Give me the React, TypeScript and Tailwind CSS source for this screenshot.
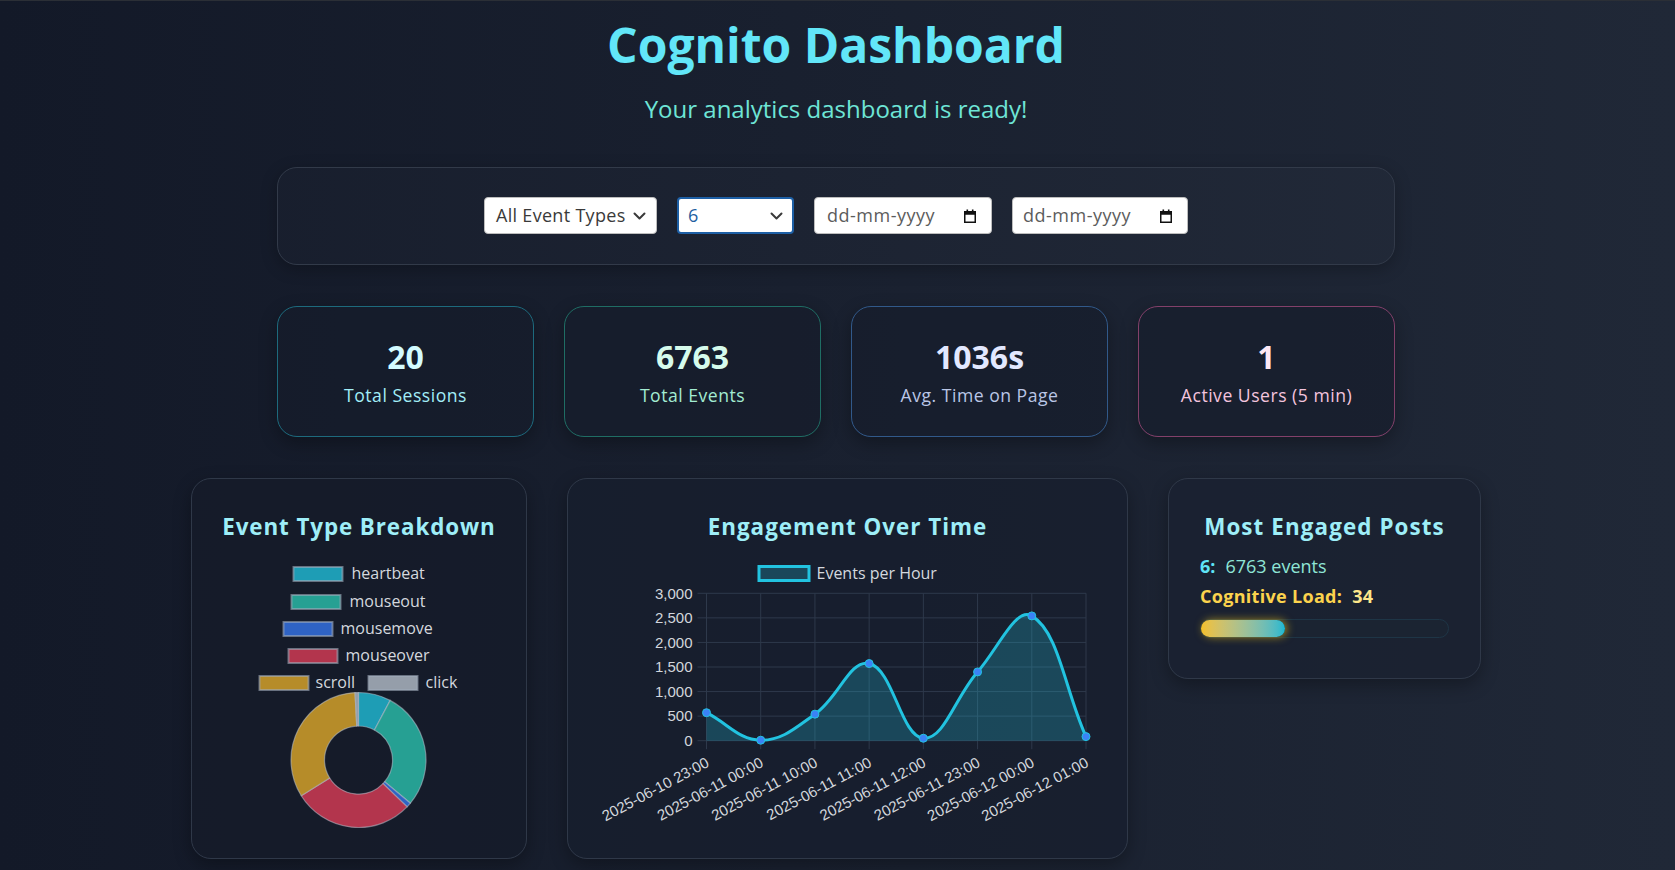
import React from "react";

type Pt = { x: number; y: number };

function Chevron() {
  return (
    <svg width="13" height="8" viewBox="0 0 13 8" className="block">
      <path d="M1.5 1.5 L6.5 6.5 L11.5 1.5" fill="none" stroke="#3a3a3a" strokeWidth="2" strokeLinecap="round" strokeLinejoin="round" />
    </svg>
  );
}

function CalendarIcon() {
  return (
    <svg width="12" height="14" viewBox="0 0 12 14" className="block">
      <rect x="0.75" y="2.75" width="10.5" height="10.5" fill="none" stroke="#111" strokeWidth="1.5" />
      <rect x="0.75" y="2.75" width="10.5" height="3" fill="#111" />
      <rect x="2.5" y="0.5" width="1.6" height="2.5" fill="#111" />
      <rect x="7.9" y="0.5" width="1.6" height="2.5" fill="#111" />
    </svg>
  );
}

const stats = [
  { v: "20", l: "Total Sessions", border: "border-[#1d6a7d]", num: "text-[#d3fbff]", lab: "text-[#a2eef8]" },
  { v: "6763", l: "Total Events", border: "border-[#1f6d64]", num: "text-[#d6fbec]", lab: "text-[#a3ecd2]" },
  { v: "1036s", l: "Avg. Time on Page", border: "border-[#31598a]", num: "text-[#e2e8ff]", lab: "text-[#bac6e6]" },
  { v: "1", l: "Active Users (5 min)", border: "border-[#83406a]", num: "text-[#fde8f4]", lab: "text-[#f4c4de]" },
];

const donut = [
  { name: "heartbeat", value: 526, color: "#1e9db5" },
  { name: "mouseout", value: 1912, color: "#26a093" },
  { name: "mousemove", value: 79, color: "#2f63c4" },
  { name: "mouseover", value: 1954, color: "#b3354d" },
  { name: "scroll", value: 2236, color: "#b68c29" },
  { name: "click", value: 56, color: "#959eaa" },
];

const legendPos = [
  { box: 292, text: 351, cy: 574 },
  { box: 290, text: 349, cy: 602 },
  { box: 282, text: 340, cy: 629 },
  { box: 287, text: 345, cy: 656 },
  { box: 258, text: 315, cy: 683 },
  { box: 367, text: 425, cy: 683 },
];

function arcPath(cx: number, cy: number, r: number, ri: number, a0: number, a1: number) {
  const p = (rr: number, a: number) => `${(cx + rr * Math.sin(a)).toFixed(2)} ${(cy - rr * Math.cos(a)).toFixed(2)}`;
  const large = a1 - a0 > Math.PI ? 1 : 0;
  return `M ${p(r, a0)} A ${r} ${r} 0 ${large} 1 ${p(r, a1)} L ${p(ri, a1)} A ${ri} ${ri} 0 ${large} 0 ${p(ri, a0)} Z`;
}

function DonutChart() {
  const total = donut.reduce((s, d) => s + d.value, 0);
  let acc = 0;
  const cx = 358;
  const cy = 760;
  return (
    <svg width="334" height="290" viewBox="191.5 545 334 290" className="block">
      {donut.map((d, i) => {
        const lp = legendPos[i];
        return (
          <g key={d.name}>
            <rect x={lp.box + 1} y={lp.cy - 7} width={49} height={14} fill={d.color} stroke="rgba(160,172,186,0.6)" strokeWidth="2" />
            <text x={lp.text} y={lp.cy + 5} fontSize="16" fill="#d4d8de" style={{ fontFamily: "'Open Sans', sans-serif" }}>
              {d.name}
            </text>
          </g>
        );
      })}
      {donut.map((d) => {
        const a0 = (acc / total) * Math.PI * 2;
        acc += d.value;
        const a1 = (acc / total) * Math.PI * 2;
        return <path key={d.name} d={arcPath(cx, cy, 67.5, 34, a0, a1)} fill={d.color} stroke="rgba(180,190,202,0.55)" strokeWidth="1.2" />;
      })}
    </svg>
  );
}

const X0 = 706;
const X1 = 1085.5;
const YT = 593.3;
const YB = 740.7;
const vals = [570, 10, 540, 1570, 50, 1400, 2540, 83];
const xLabels = [
  "2025-06-10 23:00",
  "2025-06-11 00:00",
  "2025-06-11 10:00",
  "2025-06-11 11:00",
  "2025-06-11 12:00",
  "2025-06-11 23:00",
  "2025-06-12 00:00",
  "2025-06-12 01:00",
];
const yTicks = [
  { v: 0, t: "0" },
  { v: 500, t: "500" },
  { v: 1000, t: "1,000" },
  { v: 1500, t: "1,500" },
  { v: 2000, t: "2,000" },
  { v: 2500, t: "2,500" },
  { v: 3000, t: "3,000" },
];

function buildPath(pts: Pt[], t: number) {
  const cps = pts.map((p, i) => {
    const prev = pts[i - 1] ?? p;
    const next = pts[i + 1] ?? p;
    const d01 = Math.hypot(p.x - prev.x, p.y - prev.y);
    const d12 = Math.hypot(next.x - p.x, next.y - p.y);
    let s01 = d01 / (d01 + d12);
    let s12 = d12 / (d01 + d12);
    if (isNaN(s01)) s01 = 0;
    if (isNaN(s12)) s12 = 0;
    const fa = t * s01;
    const fb = t * s12;
    const clamp = (q: Pt) => ({
      x: Math.min(Math.max(q.x, X0), X1),
      y: Math.min(Math.max(q.y, YT), YB),
    });
    return {
      prev: clamp({ x: p.x - fa * (next.x - prev.x), y: p.y - fa * (next.y - prev.y) }),
      next: clamp({ x: p.x + fb * (next.x - prev.x), y: p.y + fb * (next.y - prev.y) }),
    };
  });
  let d = `M ${pts[0].x} ${pts[0].y}`;
  for (let i = 1; i < pts.length; i++) {
    const a = cps[i - 1].next;
    const b = cps[i].prev;
    d += ` C ${a.x.toFixed(2)} ${a.y.toFixed(2)} ${b.x.toFixed(2)} ${b.y.toFixed(2)} ${pts[i].x.toFixed(2)} ${pts[i].y.toFixed(2)}`;
  }
  return d;
}

function LineChart() {
  const step = (X1 - X0) / 7;
  const pts: Pt[] = vals.map((v, i) => ({ x: X0 + i * step, y: YB - (v / 3000) * (YB - YT) }));
  const line = buildPath(pts, 0.4);
  const area = `${line} L ${pts[pts.length - 1].x} ${YB} L ${pts[0].x} ${YB} Z`;
  const grid = "#2e394b";
  const font = { fontFamily: "'Liberation Sans', Arial, sans-serif" };
  return (
    <svg width="559" height="290" viewBox="567.5 545 559 290" className="block">
      <rect x="758.5" y="566.5" width="50" height="14" fill="rgba(34,195,224,0.25)" stroke="#22c3e0" strokeWidth="3" />
      <text x="816" y="578.5" fontSize="16" fill="#d4d8de" style={{ fontFamily: "'Open Sans', sans-serif" }}>
        Events per Hour
      </text>
      {yTicks.map((tk) => {
        const y = YB - (tk.v / 3000) * (YB - YT);
        return (
          <g key={tk.t}>
            <line x1={697} x2={X1} y1={y} y2={y} stroke={grid} strokeWidth="1" />
            <text x={692} y={y + 5.3} fontSize="15" fill="#d2d6dc" textAnchor="end" style={font}>
              {tk.t}
            </text>
          </g>
        );
      })}
      {pts.map((p, i) => (
        <line key={i} x1={p.x} x2={p.x} y1={YT} y2={YB + 8.5} stroke={grid} strokeWidth="1" />
      ))}
      <path d={area} fill="rgba(34,195,224,0.25)" />
      <path d={line} fill="none" stroke="#22c3e0" strokeWidth="3" strokeLinejoin="round" />
      {pts.map((p, i) => (
        <circle key={i} cx={p.x} cy={p.y} r="4" fill="#3b82f6" stroke="#22c3e0" strokeWidth="1" />
      ))}
      {pts.map((p, i) => {
        const ax = p.x + 1;
        const ay = 761;
        return (
          <text
            key={i}
            x={ax}
            y={ay}
            fontSize="15"
            fill="#d2d6dc"
            textAnchor="end"
            dominantBaseline="central"
            transform={`rotate(-28 ${ax} ${ay})`}
            style={font}
          >
            {xLabels[i]}
          </text>
        );
      })}
    </svg>
  );
}

export default function App() {
  return (
    <div className="w-full h-[870px] overflow-hidden border-t border-[#2b2f36] bg-linear-to-r from-[#131928] to-[#202837] font-['Open_Sans',sans-serif] pr-[3px]">
      <div className="flex flex-col items-center pt-[20px]">
        <h1 className="text-[48px] leading-[48px] font-bold text-[#62e6f8]">Cognito Dashboard</h1>
        <p className="mt-[24px] text-[24px] leading-[32px] text-[#6ee5d6]">Your analytics dashboard is ready!</p>

        <div className="mt-[42px] w-[1118px] rounded-[20px] border border-[#323a49] bg-[#ffffff04] pt-[29px] pb-[30px] flex justify-center gap-5 shadow-[0_4px_16px_rgba(0,0,0,0.25)]">
          <div className="w-[173px] h-[37px] bg-white rounded-[4px] border border-[#bdbdbd] flex items-center justify-between pl-[11px] pr-[10px] text-[18px] tracking-[0.3px] text-[#3a3a3a]">
            <span>All Event Types</span>
            <Chevron />
          </div>
          <div className="w-[117px] h-[37px] bg-white rounded-[4px] border-2 border-[#1d5fa5] flex items-center justify-between pl-[9px] pr-[9px] text-[18px] text-[#2360a0]">
            <span>6</span>
            <Chevron />
          </div>
          <div className="w-[178px] h-[37px] bg-white rounded-[4px] border border-[#bdbdbd] flex items-center justify-between pl-[12px] pr-[15px] text-[18px] tracking-[0.5px] text-[#5c5c5c]">
            <span>dd-mm-yyyy</span>
            <CalendarIcon />
          </div>
          <div className="w-[176px] h-[37px] bg-white rounded-[4px] border border-[#bdbdbd] flex items-center justify-between pl-[10px] pr-[15px] text-[18px] tracking-[0.5px] text-[#5c5c5c]">
            <span>dd-mm-yyyy</span>
            <CalendarIcon />
          </div>
        </div>

        <div className="mt-[41px] w-[1118px] grid grid-cols-4 gap-[30px]">
          {stats.map((s) => (
            <div
              key={s.l}
              className={`h-[131px] rounded-[20px] border ${s.border} bg-[#151c2b]/60 shadow-[0_6px_18px_rgba(0,0,0,0.3)] flex flex-col items-center pt-[30px]`}
            >
              <div className={`text-[32px] leading-[40px] font-bold ${s.num}`}>{s.v}</div>
              <div className={`mt-[6px] text-[17.6px] leading-[24px] tracking-[0.5px] ${s.lab}`}>{s.l}</div>
            </div>
          ))}
        </div>

        <div className="mt-[41px] flex items-start gap-[40px]">
          <div className="w-[336px] h-[381px] rounded-[20px] border border-[#2f3848] bg-[#151b2a]/70 shadow-[0_6px_18px_rgba(0,0,0,0.3)] flex flex-col items-center pt-[34px]">
            <h2 className="text-[22.4px] leading-[28px] font-bold tracking-[0.9px] text-[#9eeef8]">Event Type Breakdown</h2>
            <div className="mt-[4px]">
              <DonutChart />
            </div>
          </div>

          <div className="w-[561px] h-[381px] rounded-[20px] border border-[#2f3848] bg-[#171e2d]/70 shadow-[0_6px_18px_rgba(0,0,0,0.3)] flex flex-col items-center pt-[34px]">
            <h2 className="text-[22.4px] leading-[28px] font-bold tracking-[1px] text-[#9eeef8]">Engagement Over Time</h2>
            <div className="mt-[4px]">
              <LineChart />
            </div>
          </div>

          <div className="w-[313px] h-[201px] rounded-[20px] border border-[#2f3848] bg-[#1a2130]/70 shadow-[0_6px_18px_rgba(0,0,0,0.3)] flex flex-col pt-[34px] px-[31px]">
            <h2 className="text-center text-[22.4px] leading-[28px] font-bold tracking-[1.1px] text-[#9eeef8]">Most Engaged Posts</h2>
            <div className="mt-[13px] text-[18px] leading-[24px] flex items-baseline">
              <span className="font-bold text-[#5fe3f6] mr-[10px]">6:</span>
              <span className="text-[#8fe6d6]">6763 events</span>
            </div>
            <div className="mt-[6px] text-[18px] leading-[24px] font-bold tracking-[0.3px] flex items-baseline">
              <span className="text-[#fcd34d] mr-[10px]">Cognitive Load:</span>
              <span className="text-[#fde68a]">34</span>
            </div>
            <div className="mt-[11px] h-[19px] w-full rounded-full bg-[#1b2432] border border-[#1e3546]">
              <div className="h-full w-[34%] rounded-full bg-linear-to-r from-[#f4c025] to-[#14b8d0] shadow-[2px_0_8px_rgba(250,204,21,0.6)]" />
            </div>
          </div>
        </div>
      </div>
    </div>
  );
}
